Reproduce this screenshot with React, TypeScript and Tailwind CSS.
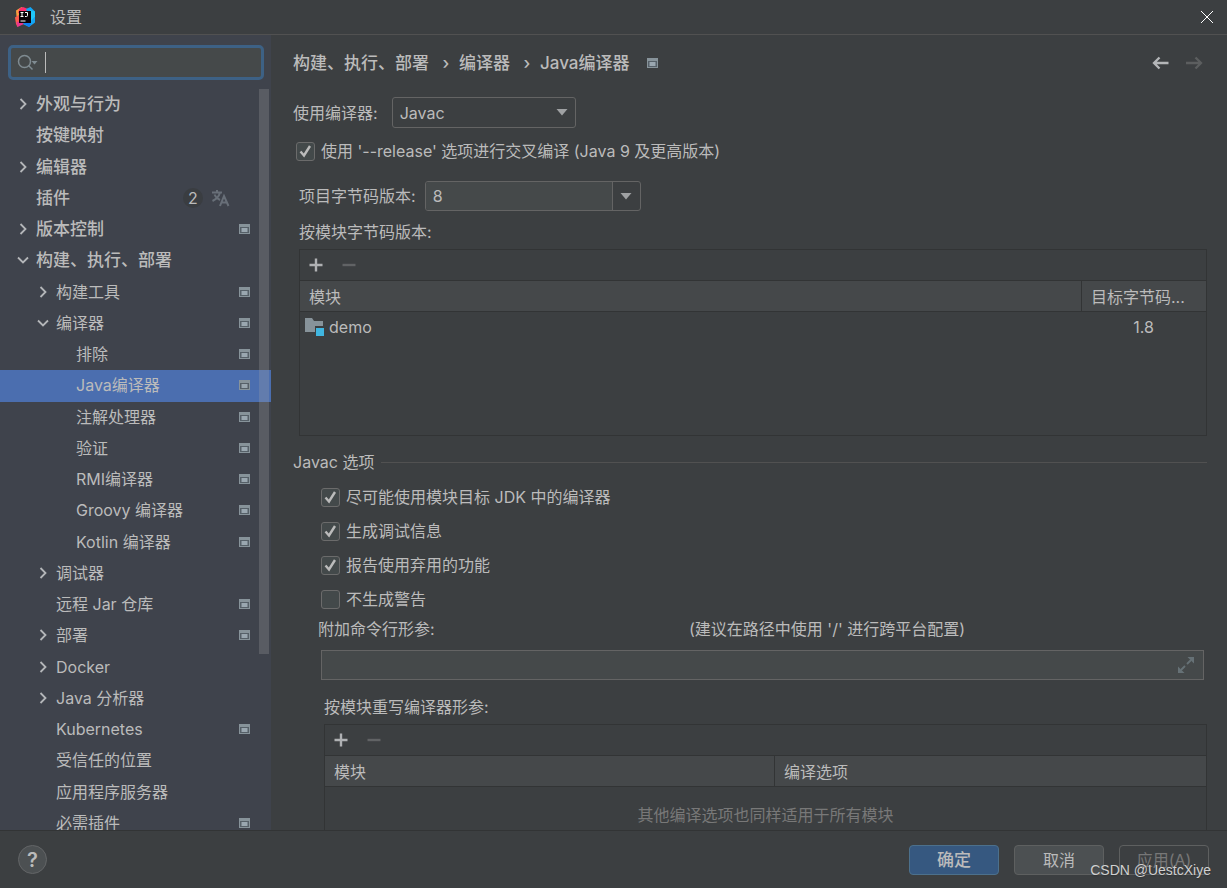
import { useState } from "react";
import type { ReactNode } from "react";
import clsx from "clsx";

type TreeItem = {
	label: string;
	level: 0 | 1 | 2;
	state?: "open" | "closed";
	project?: boolean;
	badge?: number;
};

const items: TreeItem[] = [
	{ label: "外观与行为", level: 0, state: "closed" },
	{ label: "按键映射", level: 0 },
	{ label: "编辑器", level: 0, state: "closed" },
	{ label: "插件", level: 0, badge: 2 },
	{ label: "版本控制", level: 0, state: "closed", project: true },
	{ label: "构建、执行、部署", level: 0, state: "open" },
	{ label: "构建工具", level: 1, state: "closed", project: true },
	{ label: "编译器", level: 1, state: "open", project: true },
	{ label: "排除", level: 2, project: true },
	{ label: "Java编译器", level: 2, project: true },
	{ label: "注解处理器", level: 2, project: true },
	{ label: "验证", level: 2, project: true },
	{ label: "RMI编译器", level: 2, project: true },
	{ label: "Groovy 编译器", level: 2, project: true },
	{ label: "Kotlin 编译器", level: 2, project: true },
	{ label: "调试器", level: 1, state: "closed" },
	{ label: "远程 Jar 仓库", level: 1, project: true },
	{ label: "部署", level: 1, state: "closed", project: true },
	{ label: "Docker", level: 1, state: "closed" },
	{ label: "Java 分析器", level: 1, state: "closed" },
	{ label: "Kubernetes", level: 1, project: true },
	{ label: "受信任的位置", level: 1 },
	{ label: "应用程序服务器", level: 1 },
	{ label: "必需插件", level: 1, project: true },
];

const indent = ["pl-4", "pl-9", "pl-14"];

function IdeaLogo() {
	return (
		<svg width="20" height="20" viewBox="0 0 20 20" aria-hidden="true">
			<path d="M1 3.5 6.5 0 10 3 7 12 1.5 9.5Z" fill="#f9a03c" />
			<path d="M4.5 1.5 8 0l5 2-4 5-6-1Z" fill="#fe2f6e" />
			<path d="M0 10.5 5 7l3 7-5.5 6L1 17Z" fill="#fc5c4f" />
			<path d="M1.5 15 8 14l1 3-6.5 3Z" fill="#e8368f" />
			<path d="M11 2 15.5 0 20 4.5v11L14 20l-6-3 6-7Z" fill="#12a5f5" />
			<path d="m15 3 5 1.5v5L16 14Z" fill="#20c6f8" />
			<path d="m8 16 6-1 2 2-2 3Z" fill="#0c7bf2" />
			<rect x="4" y="4" width="12" height="12" fill="#0a0208" />
			<path d="M5.5 5.5h3M7 5.5v4M5.5 9.5h3M10 5.5h2.5v3q0 1-1 1H10M5.5 14h5" fill="none" stroke="#fff" strokeWidth="1" />
		</svg>
	);
}

function ProjectIcon() {
	return (
		<svg width="11" height="10" viewBox="0 0 11 10" className="shrink-0" aria-hidden="true">
			<path d="M0 0h11v10H0Z" fill="#87939a" />
			<path d="M1 3h9v6H1Z" fill="#566068" />
			<path d="M2.5 4h6v4h-6Z" fill="#9aa7b0" />
		</svg>
	);
}

function Chevron({ open }: { open: boolean }) {
	return (
		<svg width="14" height="14" viewBox="0 0 14 14" fill="none" stroke="#b4b6b9" strokeWidth="1.8" aria-hidden="true">
			<path d={open ? "m2 4.5 5 5 5-5" : "m4.5 2 5 5-5 5"} />
		</svg>
	);
}

function Triangle() {
	return (
		<svg width="12" height="7" viewBox="0 0 12 7" aria-hidden="true">
			<path d="M.5 0h11L6 6.5Z" fill="#9fa1a3" />
		</svg>
	);
}

function Arrow({ forward }: { forward?: boolean }) {
	return (
		<svg width="18" height="14" viewBox="0 0 18 14" fill="none" strokeWidth="2.3" stroke={forward ? "#5c5e5f" : "#b4b6b8"} aria-hidden="true">
			<path d={forward ? "M1 7h15M10.5 1.5 16 7l-5.5 5.5" : "M17.5 7H3m5.5-5.5L3 7l5.5 5.5"} />
		</svg>
	);
}

function TreeRow({ item, selected, onSelect }: { item: TreeItem; selected: boolean; onSelect: () => void }) {
	return (
		<button
			type="button"
			onClick={onSelect}
			className={clsx("flex min-h-0 w-full items-center pr-[21px] pb-px text-left focus:outline-none", indent[item.level], selected && "bg-[#4b6eaf]")}
		>
			<span className="w-5 shrink-0">{item.state && <Chevron open={item.state === "open"} />}</span>
			<span className={clsx("flex-1 truncate", item.level === 0 ? "text-[17px] font-medium" : "text-base")}>{item.label}</span>
			{item.badge && (
				<span className="flex items-center gap-2 pr-5">
					<span className="grid size-5 place-items-center rounded-full bg-[#3a3d41] text-base leading-5">{item.badge}</span>
					<svg width="19" height="18" viewBox="0 0 19 18" fill="none" stroke="#686f78" strokeWidth="2" aria-hidden="true">
						<path d="M1 3.5h10M6 1v2.5M9 3.5C8 7.5 5.5 10 1.5 12M3.5 5.5C4.5 8 6.500 9.800 9 11M9 17l4-10 4.500 10M10.500 13.500h6" />
					</svg>
				</span>
			)}
			{item.project && <ProjectIcon />}
		</button>
	);
}

function Check({ label, defaultChecked, className }: { label: string; defaultChecked?: boolean; className?: string }) {
	return (
		<label className={clsx("flex items-center gap-1.5", className)}>
			<span className="relative size-[19px] shrink-0">
				<input type="checkbox" defaultChecked={defaultChecked} className="peer block size-full appearance-none rounded-[3px] border border-[#6b6b6b] bg-[#43494a]" />
				<svg viewBox="0 0 19 19" className="pointer-events-none absolute inset-0 hidden peer-checked:block" fill="none" stroke="#bbb" strokeWidth="2.4" aria-hidden="true">
					<path d="m4.5 9.500 3.500 4 6-9.500" />
				</svg>
			</span>
			{label}
		</label>
	);
}

function Toolbar() {
	return (
		<div className="flex h-[31px] items-center gap-[19px] border-b border-[#323435] pl-[9px]">
			<button type="button" aria-label="添加">
				<svg width="14" height="14" viewBox="0 0 14 14" stroke="#afb1b3" strokeWidth="2.4">
					<path d="M7 .5v13M.5 7h13" />
				</svg>
			</button>
			<button type="button" aria-label="移除" disabled>
				<svg width="14" height="14" viewBox="0 0 14 14" stroke="#616365" strokeWidth="2.4">
					<path d="M.5 7h13" />
				</svg>
			</button>
		</div>
	);
}

function Th({ children, className }: { children: ReactNode; className?: string }) {
	return <th className={clsx("h-[31px] truncate border-b border-[#323435] bg-[#45484a] pt-px pb-0 pl-[9px] text-left font-normal", className)}>{children}</th>;
}

export default function App() {
	const [selected, setSelected] = useState("Java编译器");

	return (
		<div className="relative flex h-screen flex-col overflow-hidden bg-[#3c3f41] font-['Inter','Noto_Sans_CJK_SC',sans-serif] text-base leading-5 font-normal text-[#bbbbbb]">
			<header className="flex h-[35px] shrink-0 items-center border-b border-[#515151] pr-[13px] pl-[15px]">
				<IdeaLogo />
				<h1 className="ml-[15px] flex-1">设置</h1>
				<button type="button" aria-label="关闭">
					<svg width="14" height="14" viewBox="0 0 14 14" stroke="#fff" strokeWidth="1">
						<path d="m1 1 12 12M13 1 1 13" />
					</svg>
				</button>
			</header>

			<div className="flex min-h-0 flex-1">
				<aside className="flex w-[271px] shrink-0 flex-col overflow-hidden bg-[#3f434c]">
					<label className="mr-[7px] ml-2 mt-2.5 flex h-[35px] shrink-0 items-center gap-[7px] rounded-[5px] border-3 border-[#3d6185] bg-[#45494a] pl-1.5">
						<svg width="21" height="17" viewBox="0 0 21 17" fill="none" stroke="#7f8b91" strokeWidth="1.5" aria-label="搜索">
							<circle cx="7.5" cy="7.5" r="6" />
							<path d="m11.500 11.500 4 4" />
							<path d="M14.500 7h6l-3 3.500Z" fill="#7f8b91" stroke="none" />
						</svg>
						<span className="h-[21px] w-px bg-[#bbbbbb]" />
						<input type="text" className="min-w-0 flex-1 bg-transparent outline-none" />
					</label>
					<nav className="relative mt-[9px] min-h-0 flex-1 overflow-hidden">
						<div className="grid h-[750px] auto-rows-fr">
							{items.map((item) => (
								<TreeRow key={item.label} item={item} selected={item.label === selected} onSelect={() => setSelected(item.label)} />
							))}
						</div>
						<div className="absolute top-0 right-[2px] h-[565px] w-2.5 bg-[#a6a6a6]/25" />
					</nav>
				</aside>

				<main className="min-w-0 flex-1 overflow-hidden pr-5 pl-[22px]">
					<div className="flex h-14 items-center text-[17px] font-medium">
						<a href="#build">构建、执行、部署</a>
						<span className="w-[30px] pl-1 text-center">›</span>
						<a href="#compiler">编译器</a>
						<span className="w-[30px] pl-1 text-center">›</span>
						<h2 className="mr-[18px] flex-1">
							<span className="inline-flex items-center gap-[18px]">
								Java编译器
								<ProjectIcon />
							</span>
						</h2>
						<div className="flex gap-4 pr-1">
							<button type="button" aria-label="后退">
								<Arrow />
							</button>
							<button type="button" aria-label="前进" disabled>
								<Arrow forward />
							</button>
						</div>
					</div>

					<div className="mt-1.5 flex h-[31px] items-center gap-3.5">
						<label htmlFor="compiler">使用编译器:</label>
						<span className="relative h-full w-[184px]">
							<select id="compiler" className="size-full appearance-none rounded-[3px] border border-[#646464] bg-[#3c3f41] pl-[7px]">
								<option>Javac</option>
								<option>Eclipse</option>
							</select>
							<span className="pointer-events-none absolute inset-y-0 right-2 flex items-center">
								<Triangle />
							</span>
						</span>
					</div>

					<Check className="mt-[13px] h-5 pl-[3px]" defaultChecked label="使用 '--release' 选项进行交叉编译 (Java 9 及更高版本)" />

					<section className="pl-1.5">
						<div className="mt-5 flex h-[30px] items-center gap-[9px]">
							<label htmlFor="bytecode">项目字节码版本:</label>
							<div className="flex h-full w-[216px] overflow-hidden rounded-[3px] border border-[#646464]">
								<input id="bytecode" type="text" defaultValue="8" className="min-w-0 flex-1 bg-[#45494a] pl-[7px] outline-none" />
								<button type="button" aria-label="选择版本" className="grid w-7 place-items-center border-l border-[#646464]">
									<Triangle />
								</button>
							</div>
						</div>
						<h3 className="mt-[11px] h-5">按模块字节码版本:</h3>
						<div className="mt-[7px] h-[187px] border border-[#323435]">
							<Toolbar />
							<table className="w-full table-fixed border-separate border-spacing-0">
								<thead>
									<tr>
										<Th>模块</Th>
										<Th className="w-[125px] border-l">目标字节码...</Th>
									</tr>
								</thead>
								<tbody>
									<tr className="h-[30px]">
										<td className="p-0 pl-[5px]">
											<span className="flex items-center gap-1">
												<svg width="20" height="20" viewBox="0 0 20 20" aria-hidden="true">
													<path d="M0 1h7l2 3h9v5h-8v6H0Z" fill="#87939a" />
													<path d="M11 11h8v8h-8Z" fill="#40b6e0" />
												</svg>
												demo
											</span>
										</td>
										<td className="p-0 text-center">1.8</td>
									</tr>
								</tbody>
							</table>
						</div>
					</section>

					<div className="mt-4 flex h-5 items-center gap-[7px]">
						<h3>Javac 选项</h3>
						<span className="h-px flex-1 bg-[#515151]" />
					</div>

					<section className="pl-7">
						<Check className="mt-2 h-[34px]" defaultChecked label="尽可能使用模块目标 JDK 中的编译器" />
						<Check className="h-[34px]" defaultChecked label="生成调试信息" />
						<Check className="h-[34px]" defaultChecked label="报告使用弃用的功能" />
						<Check className="h-[34px]" label="不生成警告" />
					</section>

					<section className="pl-[25px]">
						<div className="mt-[3px] flex h-5">
							<label htmlFor="params" className="w-[371px]">
								附加命令行形参:
							</label>
							<span>(建议在路径中使用 '/' 进行跨平台配置)</span>
						</div>
						<div className="mx-[3px] mt-[11px] flex h-[30px] items-center border border-[#646464] bg-[#45494a] pr-[9px]">
							<input id="params" type="text" className="h-full min-w-0 flex-1 bg-transparent px-2 outline-none" />
							<button type="button" aria-label="展开">
								<svg width="16" height="16" viewBox="0 0 16 16" fill="#667176" stroke="#667176">
									<path d="M9.500 0H16v6.500ZM0 9.500V16h6.500Z" stroke="none" />
									<path d="m9 7 4-4M3 13l4-4" strokeWidth="1.8" />
								</svg>
							</button>
						</div>
					</section>

					<section className="pl-[31px]">
						<h3 className="mt-[17px] h-5">按模块重写编译器形参:</h3>
						<div className="mt-[7px] h-[187px] border border-[#323435]">
							<Toolbar />
							<table className="w-full table-fixed border-separate border-spacing-0">
								<thead>
									<tr>
										<Th className="w-[449px]">模块</Th>
										<Th className="border-l">编译选项</Th>
									</tr>
								</thead>
								<tbody>
									<tr>
										<td colSpan={2} className="h-14 p-0 text-center text-[#787878]">
											其他编译选项也同样适用于所有模块
										</td>
									</tr>
								</tbody>
							</table>
						</div>
					</section>
				</main>
			</div>

			<footer className="flex h-[58px] shrink-0 items-center gap-[15px] border-t border-[#323435] px-[18px]">
				<button type="button" aria-label="帮助" className="mr-auto grid size-[29px] place-items-center rounded-full border border-[#636567] bg-[#4c5052] text-xl font-semibold">
					?
				</button>
				<button type="button" className="h-[30px] w-[90px] rounded-[4px] border border-[#4c708c] bg-[#365880] text-[17px] font-medium">
					确定
				</button>
				<button type="button" className="h-[30px] w-[90px] rounded-[4px] border border-[#5e6060] bg-[#4c5052]">
					取消
				</button>
				<button type="button" disabled className="h-[30px] w-[90px] rounded-[4px] border border-[#5e6060] text-[#777777]">
					应用(A)
				</button>
			</footer>
			<span className="pointer-events-none absolute right-4 bottom-2 font-['Liberation_Sans',sans-serif] text-sm text-[#d0d0d0] text-shadow-sm">CSDN @UestcXiye</span>
		</div>
	);
}
